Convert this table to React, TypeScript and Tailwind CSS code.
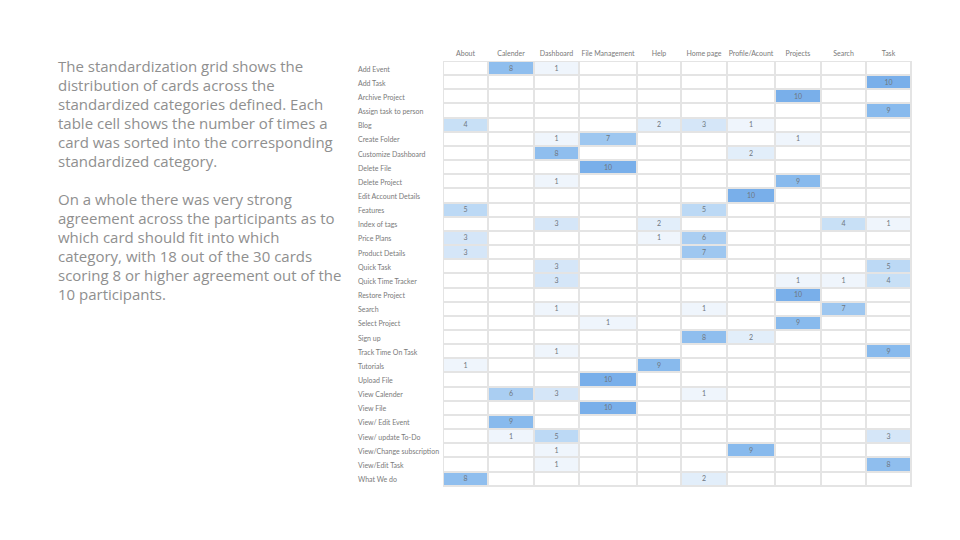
const columns = ['About', 'Calender', 'Dashboard', 'File Management', 'Help', 'Home page', 'Profile/Acount', 'Projects', 'Search', 'Task'];

const rows: [string, (number | null)[]][] = [
  ['Add Event', [null, 8, 1, null, null, null, null, null, null, null]],
  ['Add Task', [null, null, null, null, null, null, null, null, null, 10]],
  ['Archive Project', [null, null, null, null, null, null, null, 10, null, null]],
  ['Assign task to person', [null, null, null, null, null, null, null, null, null, 9]],
  ['Blog', [4, null, null, null, 2, 3, 1, null, null, null]],
  ['Create Folder', [null, null, 1, 7, null, null, null, 1, null, null]],
  ['Customize Dashboard', [null, null, 8, null, null, null, 2, null, null, null]],
  ['Delete File', [null, null, null, 10, null, null, null, null, null, null]],
  ['Delete Project', [null, null, 1, null, null, null, null, 9, null, null]],
  ['Edit Account Details', [null, null, null, null, null, null, 10, null, null, null]],
  ['Features', [5, null, null, null, null, 5, null, null, null, null]],
  ['Index of tags', [null, null, 3, null, 2, null, null, null, 4, 1]],
  ['Price Plans', [3, null, null, null, 1, 6, null, null, null, null]],
  ['Product Details', [3, null, null, null, null, 7, null, null, null, null]],
  ['Quick Task', [null, null, 3, null, null, null, null, null, null, 5]],
  ['Quick Time Tracker', [null, null, 3, null, null, null, null, 1, 1, 4]],
  ['Restore Project', [null, null, null, null, null, null, null, 10, null, null]],
  ['Search', [null, null, 1, null, null, 1, null, null, 7, null]],
  ['Select Project', [null, null, null, 1, null, null, null, 9, null, null]],
  ['Sign up', [null, null, null, null, null, 8, 2, null, null, null]],
  ['Track Time On Task', [null, null, 1, null, null, null, null, null, null, 9]],
  ['Tutorials', [1, null, null, null, 9, null, null, null, null, null]],
  ['Upload File', [null, null, null, 10, null, null, null, null, null, null]],
  ['View Calender', [null, 6, 3, null, null, 1, null, null, null, null]],
  ['View File', [null, null, null, 10, null, null, null, null, null, null]],
  ['View/ Edit Event', [null, 9, null, null, null, null, null, null, null, null]],
  ['View/ update To-Do', [null, 1, 5, null, null, null, null, null, null, 3]],
  ['View/Change subscription', [null, null, 1, null, null, null, 9, null, null, null]],
  ['View/Edit Task', [null, null, 1, null, null, null, null, null, null, 8]],
  ['What We do', [8, null, null, null, null, 2, null, null, null, null]],
];

const shade: Record<number, string> = {
  10: 'bg-[#79afea]',
  9: 'bg-[#88baed]',
  8: 'bg-[#8fbeee]',
  7: 'bg-[#9ec7f0]',
  6: 'bg-[#aacef2]',
  5: 'bg-[#bcd9f5]',
  4: 'bg-[#c8e0f6]',
  3: 'bg-[#d5e6f8]',
  2: 'bg-[#e2eefa]',
  1: 'bg-[#eff5fc]',
};

// column widths follow the grid lines of the chart
const gridCols = 'grid-cols-[45px_46px_45px_58px_44px_46px_48px_46px_45px_45px]';

// lines are broken where the slide breaks them
const intro = [
  'The standardization grid shows the',
  'distribution of cards across the',
  'standardized categories defined. Each',
  'table cell shows the number of times a',
  'card was sorted into the corresponding',
  'standardized category.',
];

const summary = [
  'On a whole there was very strong',
  'agreement across the participants as to',
  'which card should fit into which',
  'category, with 18 out of the 30 cards',
  'scoring 8 or higher agreement out of the',
  '10 participants.',
];

const StandardizationGrid = () => (
  <div className="flex flex-col font-['Lato','Liberation_Sans',sans-serif] text-[7px] leading-none text-[#7a7a7a]">
    {/* header */}
    <div className="flex h-[16px] items-start pl-[85px]">
      <div className={`grid ${gridCols}`}>
        {columns.map((c) => (
          <div key={c} className="text-center whitespace-nowrap pt-[5px]">{c}</div>
        ))}
      </div>
    </div>

    <div className="flex">
      {/* row labels */}
      <div className="flex w-[85px] flex-col pt-[1px]">
        {rows.map(([label]) => (
          <div key={label} className="flex h-[14.17px] items-center whitespace-nowrap">{label}</div>
        ))}
      </div>

      {/* cells */}
      <div className={`grid ${gridCols} auto-rows-[14.17px] border-t border-l border-[#e4e4e4]`}>
        {rows.map(([label, vals]) =>
          vals.map((v, i) => (
            <div
              key={label + i}
              className={`flex items-center justify-center border-r-2 border-b-2 border-[#e4e4e4] text-[7px] text-[#6f7780] ${v ? shade[v] : 'bg-white'}`}
            >
              {v ?? ''}
            </div>
          ))
        )}
      </div>
    </div>
  </div>
);

export default function App() {
  return (
    <div className="flex h-[540px] w-[960px] bg-white">
      <div className="flex w-[300px] shrink-0 flex-col gap-[19px] pl-[58px] pt-[57px] font-['Open_Sans','Liberation_Sans',sans-serif] text-[15px] leading-[19px] text-[#8f8f8f]">
        <p className="whitespace-nowrap">
          {intro.map((l) => (
            <span key={l} className="block">{l}</span>
          ))}
        </p>
        <p className="whitespace-nowrap">
          {summary.map((l) => (
            <span key={l} className="block">{l}</span>
          ))}
        </p>
      </div>
      <div className="pl-[58px] pt-[45px]">
        <StandardizationGrid />
      </div>
    </div>
  );
}
